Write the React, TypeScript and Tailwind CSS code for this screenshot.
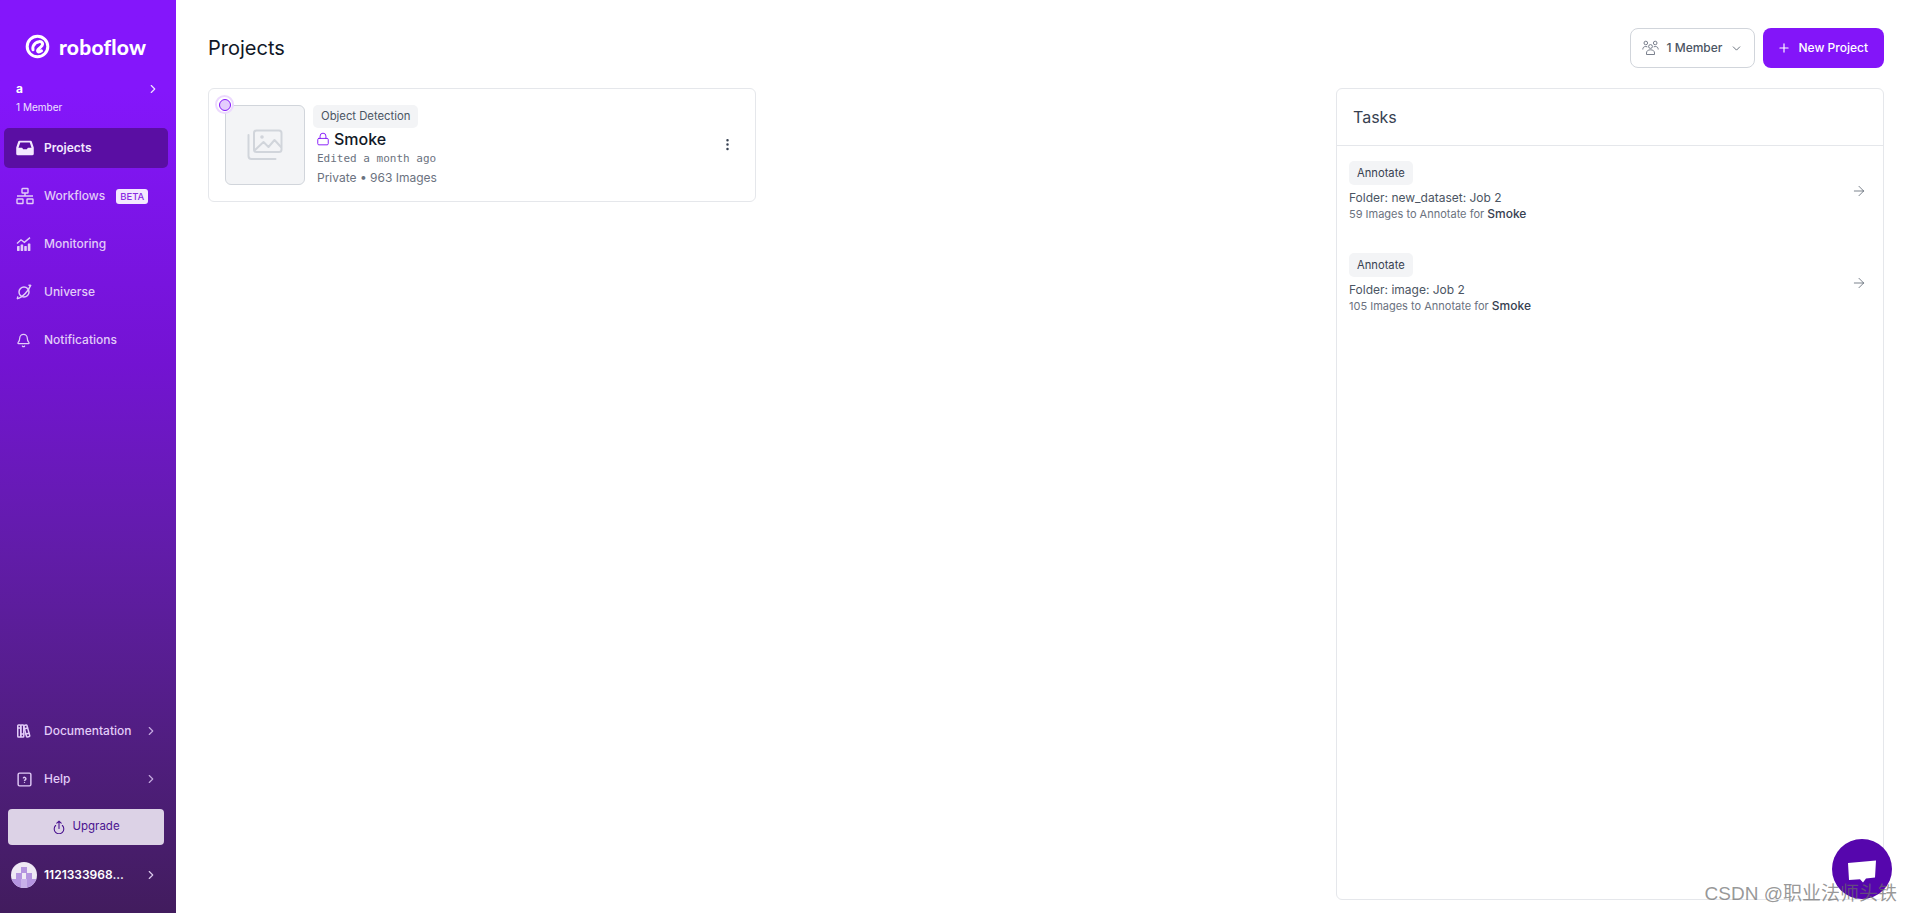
import React from "react";
import { ArrowRight, Bell, ChevronDown, ChevronRight, EllipsisVertical, Lock, Plus } from "lucide-react";
import { TbBooks, TbHelpSquare } from "react-icons/tb";

const Logo = () => (
  <svg width="25" height="25" viewBox="0 0 25 25" fill="none" stroke="white" strokeWidth="3" strokeLinecap="round" strokeLinejoin="round">
    <circle cx="12.500" cy="12.500" r="10.300" />
    <path d="M8 15.800c-.6-2.800.6-5 2.500-6.600 2-1.700 5.500-2.300 6.800-.4 1.200 1.800-.6 3.400-3 5.500-1.300 1.100-2.300 2.300-1.500 3.200.8.800 2.300.3 3.700-.7" />
  </svg>
);
const InboxIcon = () => (
  <svg width="18" height="16" viewBox="0 0 16 14" fill="currentColor" fillRule="evenodd">
    <path d="M3 .5h10a1 1 0 0 1 .9.600l1.900 5.400v5.500a1.500 1.500 0 0 1-1.500 1.500H1.700A1.500 1.500 0 0 1 .2 12V6.500L2.100 1.100A1 1 0 0 1 3 .5zM3.800 2.200 2.200 6.700h3.200l1 1.500h3.200l1-1.500h3.200l-1.600-4.500z" />
  </svg>
);
const FlowIcon = () => (
  <svg width="18" height="18" viewBox="0 0 18 18" fill="none" stroke="currentColor" strokeWidth="1.4">
    <rect x="6" y="1.500" width="6" height="4.500" rx="0.600" />
    <rect x="1" y="12" width="6" height="4.500" rx="0.600" />
    <rect x="11" y="12" width="6" height="4.500" rx="0.600" />
    <path d="M9 6v3M1 9h16" />
  </svg>
);
const ChartIcon = () => (
  <svg width="16" height="16" viewBox="0 0 16 16" fill="currentColor">
    <rect x="1" y="10" width="2.600" height="5" rx="0.400" />
    <rect x="4.600" y="8.500" width="2.600" height="6.500" rx="0.400" />
    <rect x="8.200" y="10" width="2.600" height="5" rx="0.400" />
    <rect x="11.800" y="7.500" width="2.600" height="7.500" rx="0.400" />
    <path d="M1 7.500 5 3.800l3.400 2.600L14 1.600" fill="none" stroke="currentColor" strokeWidth="1.400" />
  </svg>
);
const PlanetIcon = () => (
  <svg width="16" height="16" viewBox="0 0 16 16" fill="none" stroke="currentColor" strokeWidth="1.500" strokeLinecap="round">
    <circle cx="8" cy="8" r="5" />
    <path d="M1.500 14.500c2-.3 5-2.300 7.500-4.800s4.700-5.500 5.500-8.200" />
    <path d="M14.500 1.500 13 1.200M1.500 14.500l.2-1.500" />
  </svg>
);
const UpgradeIcon = () => (
  <svg width="14" height="14" viewBox="0 0 14 14" fill="none" stroke="currentColor" strokeWidth="1.100" strokeLinecap="round" strokeLinejoin="round">
    <path d="M7 8.500V1.200M4.800 3.200 7 1.200l2.200 2" />
    <path d="M3.600 5.500a4.800 4.800 0 1 0 6.800 0" />
  </svg>
);
const MembersIcon = () => (
  <svg width="17" height="16" viewBox="0 0 17 16" fill="none" stroke="#6b7280" strokeWidth="0.900">
    <circle cx="3.800" cy="3" r="1.800" />
    <circle cx="13.200" cy="3" r="1.800" />
    <circle cx="8.500" cy="6.500" r="1.900" />
    <path d="M.8 9.500c0-2 1-3 3-3 .6 0 1.100.1 1.500.3M16.200 9.500c0-2-1-3-3-3-.6 0-1.100.1-1.500.3" />
    <path d="M4.500 14.500v-1.500c0-2 1.500-3.200 4-3.200s4 1.200 4 3.200v1.500z" />
  </svg>
);
const ImagePlaceholder = () => (
  <svg width="36" height="32" viewBox="0 0 36 32" fill="none" stroke="#d1d5db" strokeWidth="2" strokeLinecap="round" strokeLinejoin="round">
    <rect x="7" y="1.500" width="27.500" height="21.500" rx="2.500" />
    <circle cx="15" cy="8" r="1.800" fill="#d1d5db" stroke="none" />
    <path d="M8 21l8.500-8 5 5 6-7 6.500 7" />
    <path d="M1.500 6v21a3 3 0 0 0 3 3h24" />
  </svg>
);
const Avatar = () => (
  <svg width="26" height="26" viewBox="0 0 26 26" className="rounded-full">
    <rect width="26" height="26" fill="#efe9f5" />
    <rect x="5" y="11" width="6" height="6" fill="#b595e0" />
    <rect x="15" y="11" width="6" height="6" fill="#b595e0" />
    <rect x="0" y="17" width="10" height="9" fill="#b595e0" />
    <rect x="16" y="17" width="10" height="9" fill="#b595e0" />
    <rect x="10" y="5" width="6" height="6" fill="#b595e0" />
    <rect x="10" y="17" width="6" height="9" fill="#c9b0ea" />
  </svg>
);

const NavItem = ({ icon, label, active, beta, chevron }: { icon: React.ReactNode; label: string; active?: boolean; beta?: boolean; chevron?: boolean }) => (
  <div className={`ml-1 mr-2 flex h-10 items-center rounded-[5px] pl-3 pr-[10px] ${active ? "bg-[#5a0ea3] font-semibold text-[#f3e8ff]" : "font-medium text-[#e2ccf8]"}`}>
    <span className="flex w-7 shrink-0 items-center justify-start">{icon}</span>
    <span className="text-[12px] leading-4">{label}</span>
    {beta && <span className="ml-[11px] rounded-[3px] bg-[#f3e8ff] px-1 text-[9.500px] leading-[15px] font-medium text-[#8a2be2]">BETA</span>}
    {chevron && <ChevronRight size={14} className="ml-auto opacity-80" />}
  </div>
);

const Task = ({ title, count }: { title: string; count: string }) => (
  <div className="flex items-center justify-between pr-4">
    <div>
      <span className="inline-block h-6 rounded-[5px] bg-[#f3f4f6] px-2 text-[11.200px] leading-6 font-normal text-[#374151]">Annotate</span>
      <div className="mt-1 text-[12px] leading-[17px] text-[#4b5563]">{title}</div>
      <div className="text-[11px] leading-[15px] text-[#6b7280]">
        {count} to Annotate for <span className="text-[12px] font-medium text-[#374151]">Smoke</span>
      </div>
    </div>
    <ArrowRight size={16} strokeWidth={1.100} className="text-[#4b5563]" />
  </div>
);

export default function App() {
  return (
    <div className="relative flex h-screen overflow-hidden bg-white font-['Inter',sans-serif]">
      <aside className="flex w-[176px] shrink-0 flex-col bg-gradient-to-b from-[#8416fb] from-10% via-[#7313d2] via-40% to-[#421c5e]">
        <div className="flex items-center gap-[9px] pl-[25px] pt-[34px]">
          <Logo />
          <span className="font-['Lato',sans-serif] text-[21px] leading-6 font-black tracking-[0.2px] text-white">roboflow</span>
        </div>
        <div className="mt-[22px] flex items-start justify-between pl-4 pr-4">
          <div>
            <div className="text-[12px] leading-[16px] font-bold text-white">a</div>
            <div className="mt-[3px] text-[10px] leading-[14px] text-[#f0e2ff]">1 Member</div>
          </div>
          <ChevronRight size={14} className="mt-[1px] text-[#f0e2ff]" />
        </div>
        <nav className="mt-[14px] flex flex-col gap-2">
          <NavItem active label="Projects" icon={<InboxIcon />} />
          <NavItem label="Workflows" beta icon={<FlowIcon />} />
          <NavItem label="Monitoring" icon={<ChartIcon />} />
          <NavItem label="Universe" icon={<PlanetIcon />} />
          <NavItem label="Notifications" icon={<Bell size={15} />} />
        </nav>
        <div className="mt-auto flex flex-col">
          <div className="flex flex-col gap-2">
            <NavItem label="Documentation" chevron icon={<TbBooks size={18} className="-ml-[2px]" />} />
            <NavItem label="Help" chevron icon={<TbHelpSquare size={17} />} />
          </div>
          <div className="ml-2 mr-3 mt-[10px] flex h-9 items-center justify-center gap-[6px] rounded-[4px] bg-[#dcd2e6] text-[11.500px] font-normal text-[#4a1490]">
            <UpgradeIcon />
            Upgrade
          </div>
          <div className="flex h-[68px] items-start pl-[11px] pr-[18px] pt-[17px]">
            <Avatar />
            <span className="ml-[7px] text-[12px] leading-[26px] font-semibold text-white">1121333968...</span>
            <ChevronRight size={14} className="ml-auto mt-[6px] text-[#d9c8ea]" />
          </div>
        </div>
      </aside>

      <main className="flex min-w-0 flex-1 flex-col pl-8 pr-7 pb-[13px]">
        <header className="flex h-[88px] items-start justify-between pt-[28px]">
          <h1 className="text-[20px] leading-[40px] font-normal text-[#111827]">Projects</h1>
          <div className="flex gap-2">
            <div className="flex h-10 items-center rounded-[8px] border border-[#d1d5db] bg-white pl-[11px] pr-[11px] text-[12px] font-medium text-[#4b5563]">
              <MembersIcon />
              <span className="ml-2">1 Member</span>
              <ChevronDown size={13} strokeWidth={1.500} className="ml-2" />
            </div>
            <div className="flex h-10 items-center gap-[7px] rounded-[8px] bg-[#8315f9] pl-[14px] pr-4 text-[12px] font-medium text-white">
              <Plus size={14} />
              New Project
            </div>
          </div>
        </header>
        <div className="grid min-h-0 flex-1 grid-cols-3 gap-4">
          <section className="relative flex h-[114px] items-center rounded-[6px] border border-[#e5e7eb] bg-white pl-4 pr-[20px]">
            <span className="absolute left-[6px] top-[6px] flex h-[19px] w-[19px] items-center justify-center rounded-full border-2 border-[#ecd9fe] bg-white">
              <span className="h-3 w-3 rounded-full border border-[#8315f9] bg-[#e3ccfd]" />
            </span>
            <div className="flex h-20 w-20 shrink-0 items-center justify-center rounded-[6px] border border-[#d1d5db] bg-[#f3f4f6]">
              <ImagePlaceholder />
            </div>
            <div className="mb-[2px] ml-2 flex-1">
              <span className="inline-block h-[23px] rounded-[5px] bg-[#f3f4f6] px-2 text-[11.300px] leading-[23px] font-normal text-[#4b5563]">Object Detection</span>
              <div className="flex items-center pl-[3px] text-[16px] leading-[22px] font-medium text-[#111827]">
                <Lock size={14} strokeWidth={1.600} className="text-[#8315f9]" />
                <span className="ml-[4px]">Smoke</span>
              </div>
              <div className="pl-1 font-['DejaVu_Sans_Mono',monospace] text-[11px] leading-[18px] text-[#6b7280]">Edited a month ago</div>
              <div className="pl-1 text-[12px] leading-[19px] text-[#6b7280]">Private • 963 Images</div>
            </div>
            <EllipsisVertical size={15} className="mb-[2px] text-[#374151]" />
          </section>
          <div />
          <section className="flex flex-col rounded-[6px] border border-[#e5e7eb] bg-white">
            <div className="flex h-[57px] items-center border-b border-[#e5e7eb] pl-[16px] text-[16px] text-[#374151]">Tasks</div>
            <div className="flex flex-col gap-[29px] pl-3 pt-[13px]">
              <Task title="Folder: new_dataset: Job 2" count="59 Images" />
              <Task title="Folder: image: Job 2" count="105 Images" />
            </div>
          </section>
        </div>
      </main>

      <div className="absolute bottom-[14px] right-[20px] flex h-[60px] w-[60px] items-center justify-center rounded-full bg-[#5606ad]">
        <svg width="30" height="26" viewBox="0 0 30 26" fill="white" className="mt-[6px]">
          <path d="M1 4 29 1.500l-1 17-9 1-3 4-3-3.300-11 .8z" />
        </svg>
      </div>
      <div className="absolute bottom-[8px] right-[15px] font-['Liberation_Sans','Noto_Sans_CJK_SC',sans-serif] text-[19px] leading-[22px] text-[#6b6b6b]/70">CSDN @职业法师头铁</div>
    </div>
  );
}
